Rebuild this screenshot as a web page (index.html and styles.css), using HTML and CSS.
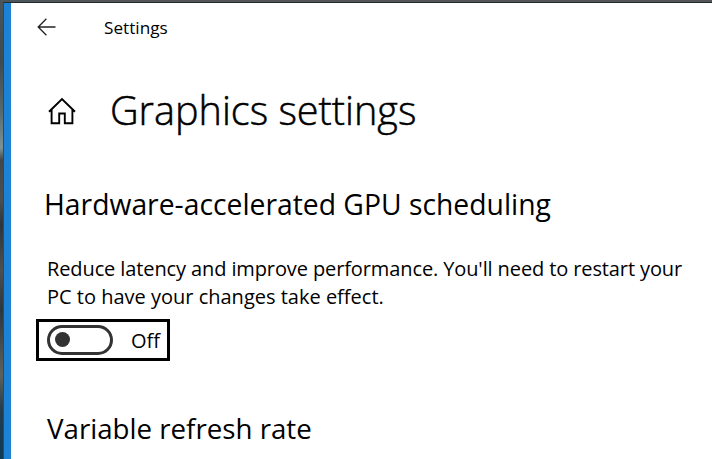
FILE: index.html
```html
<!DOCTYPE html>
<html lang="en">
<head>
    <meta charset="UTF-8">
    <meta name="viewport" content="width=device-width, initial-scale=1.0">
    <title>Settings</title>
    <link rel="stylesheet" href="styles.css">
</head>
<body>
    <div class="window">
        <header class="titlebar">
            <svg class="back" width="20" height="18" viewBox="0 0 20 18">
                <path d="M18.5 9H1.2M9.4 .8L1.2 9l8.2 8.2"/>
            </svg>
            <span class="app-name">Settings</span>
        </header>

        <div class="page-head">
            <svg class="home" width="28" height="28" viewBox="0 0 28 28">
                <path d="M1 14.8L14 2l13 12.8M3.6 12.5v13.8h7.6v-9.8h5.6v9.8h7.6V12.5"/>
            </svg>
            <h1>Graphics settings</h1>
        </div>

        <h2 class="gpu-title">Hardware-accelerated GPU scheduling</h2>
        <p class="description">
            <span class="line-1">Reduce latency and improve performance. You'll need to restart your</span><br>
            <span class="line-2">PC to have your changes take effect.</span>
        </p>
        <div class="toggle-row">
            <span class="toggle"></span>
            <span class="toggle-label">Off</span>
        </div>

        <h2 class="refresh-title">Variable refresh rate</h2>
    </div>
</body>
</html>
```
FILE: styles.css
```css
* {
    box-sizing: border-box;
}
body {
    margin: 0;
    height: 459px;
    overflow: hidden;
    padding: 2px 0 0 3px;
    background: linear-gradient(90deg, transparent 4px, #555 90px),
        linear-gradient(#4b565c 0, #3e4a50 60px, #56686c 110px, #7d9292 148px, #42484a 160px, #4b4f50 200px, #2c353b 225px, #4d504f 270px, #2b363e 310px, #5e625c 375px, #243c4c 410px, #0e3b57 459px);
    font-family: "Open Sans", "Noto Sans", sans-serif;
    color: #000;
}
h1, h2, p {
    margin: 0;
    font-weight: 400;
    white-space: nowrap;
}
.window {
    height: 457px;
    border-top: 1px solid #202b32;
    border-left: 1px solid #17507f;
    background: linear-gradient(90deg, #1c82d6 7px, #fff 7px);
    padding-left: 40px;
}
.titlebar {
    display: flex;
    align-items: center;
    height: 48px;
    margin-left: -7px;
}
.back {
    fill: none;
    stroke: #222;
    stroke-width: 1.3;
}
.app-name {
    margin-left: 47px;
    font-size: 17.2px;
}
.page-head {
    display: flex;
    align-items: center;
    height: 120px;
    margin-left: 4px;
}
.home {
    fill: none;
    stroke: #000;
    stroke-width: 1.9;
}
h1 {
    margin: -3px 0 0 34px;
    font-size: 39.6px;
    font-weight: 300;
    -webkit-text-stroke: .5px #000;
}
h2 {
    font-size: 27.7px;
    line-height: 40px;
}
.gpu-title {
    margin-top: 13px;
    font-size: 28.3px;
}
.description {
    margin: 31px 0 0 3px;
    font-size: 20px;
    line-height: 28px;
}
.line-1 {
    letter-spacing: -.11px;
}
.toggle-row {
    display: flex;
    align-items: center;
    width: 134px;
    height: 42px;
    margin: 8px 0 0 -8px;
    padding: 0 0 1px 8px;
    border: 3px solid #000;
}
.toggle {
    display: flex;
    align-items: center;
    width: 66px;
    height: 30px;
    padding-left: 5px;
    border: 3px solid #333;
    border-radius: 15px;
}
.toggle::before {
    content: "";
    width: 15px;
    height: 15px;
    border-radius: 50%;
    background: #333;
}
.toggle-label {
    margin: 1px 0 0 18px;
    font-size: 20px;
}
.refresh-title {
    margin: 47px 0 0 3px;
}
```
